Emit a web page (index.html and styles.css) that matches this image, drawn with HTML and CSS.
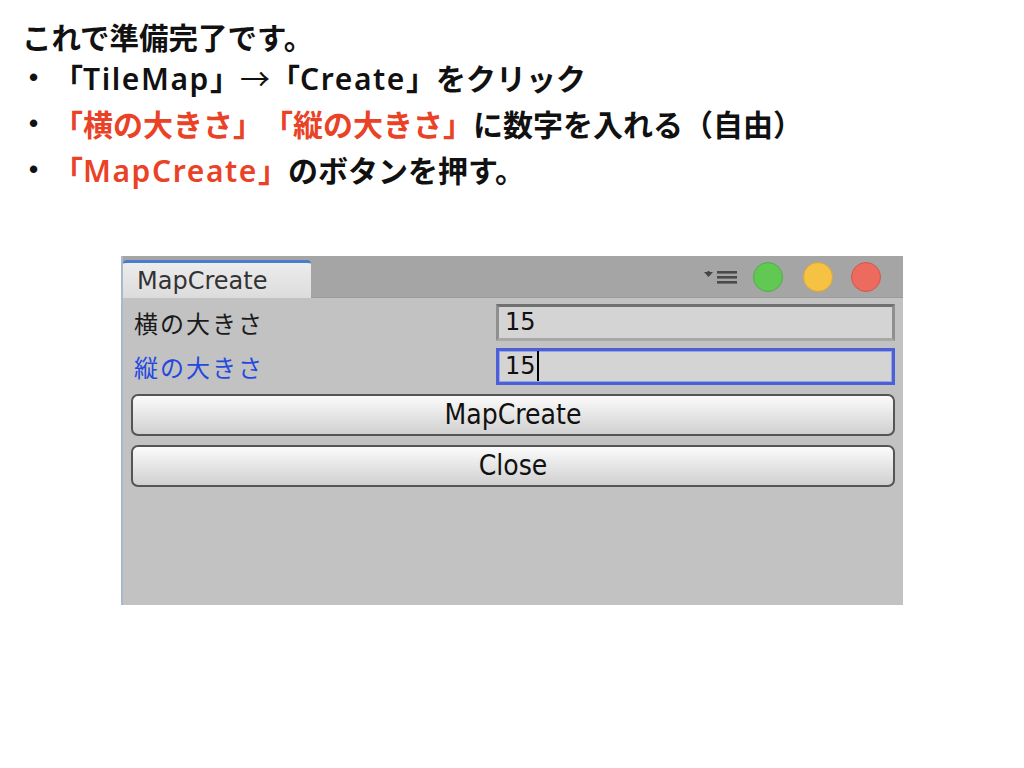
FILE: index.html
```html
<!DOCTYPE html>
<html lang="ja">
<head>
<meta charset="utf-8">
<title>MapCreate</title>
<link rel="stylesheet" href="styles.css">
</head>
<body>
<div class="slide">
  <p class="lead">これで準備完了です。</p>
  <ul class="steps">
    <li><span class="dot">•</span><span>「<span class="latin">TileMap</span>」<span class="arrow">→</span>「<span class="latin">Create</span>」をクリック</span></li>
    <li><span class="dot">•</span><span><span class="red">「横の大きさ」「縦の大きさ」</span>に数字を入れる（自由）</span></li>
    <li><span class="dot">•</span><span><span class="red">「<span class="latin">MapCreate</span>」</span>のボタンを押す。</span></li>
  </ul>

  <div class="window">
    <div class="titlebar">
      <div class="tab">MapCreate</div>
      <div class="controls">
        <svg class="menu" width="34" height="16" viewBox="0 0 34 16">
          <path d="M0 3 L9 3 L4.5 8 Z" fill="#444"/>
          <rect x="3.5" y="2" width="2" height="2" fill="#444"/>
          <rect x="13" y="2" width="20" height="2.6" fill="#4a4a4a"/>
          <rect x="13" y="7" width="20" height="2.6" fill="#4a4a4a"/>
          <rect x="13" y="12" width="20" height="2.6" fill="#4a4a4a"/>
        </svg>
        <span class="light green"></span>
        <span class="light yellow"></span>
        <span class="light red-light"></span>
      </div>
    </div>
    <div class="content">
      <div class="row">
        <label class="label">横の大きさ</label>
        <div class="field">15</div>
      </div>
      <div class="row">
        <label class="label focus">縦の大きさ</label>
        <div class="field active">15<span class="caret"></span></div>
      </div>
      <div class="button">MapCreate</div>
      <div class="button">Close</div>
    </div>
  </div>
</div>
</body>
</html>
```

FILE: styles.css
```css
html, body {
  margin: 0;
  padding: 0;
  background: #ffffff;
}

.slide {
  width: 1024px;
  height: 768px;
  padding-top: 18px;
  box-sizing: border-box;
  font-family: "Noto Sans CJK JP", sans-serif;
  color: #111;
  text-spacing-trim: space-all;
}

.lead {
  margin: 0 0 0 22px;
  height: 36px;
  display: flex;
  align-items: center;
  font-size: 29.5px;
  font-weight: 600;
  white-space: nowrap;
}

.steps {
  list-style: none;
  margin: 0;
  padding: 0 0 0 22px;
  font-size: 30px;
  font-weight: 600;
}

.steps li {
  display: flex;
  align-items: center;
  height: 46px;
  white-space: nowrap;
}

.latin {
  font-family: "Noto Sans", sans-serif;
  font-weight: 600;
  letter-spacing: 1.6px;
}

.arrow {
  font-weight: 400;
}

.dot {
  width: 31px;
  padding-right: 8px;
  box-sizing: border-box;
  text-align: center;
  font-family: "Liberation Sans", sans-serif;
  font-size: 26px;
}

.red {
  color: #ea4226;
}

.window {
  margin: 64px 0 0 121px;
  width: 782px;
  height: 349px;
  background: #c2c2c2;
  border-left: 2px solid #a9b9cc;
  box-sizing: border-box;
  display: flex;
  flex-direction: column;
  font-family: "DejaVu Sans", "Noto Sans CJK JP", sans-serif;
}

.titlebar {
  height: 42px;
  background: #a5a5a5;
  display: flex;
  align-items: flex-end;
  justify-content: space-between;
  border-bottom: 1px solid #9a9a9a;
  box-sizing: border-box;
}

.tab {
  width: 188px;
  height: 38px;
  box-sizing: border-box;
  border-top: 3px solid #4a7bcc;
  border-radius: 4px 4px 0 0;
  background: linear-gradient(#ececec, #dcdcdc);
  color: #333;
  font-size: 24px;
  line-height: 37px;
  padding-left: 14px;
  margin-bottom: -1px;
}

.controls {
  align-self: center;
  display: flex;
  align-items: center;
  padding-right: 22px;
}

.menu {
  margin-right: 15px;
}

.light {
  width: 30px;
  height: 30px;
  border-radius: 50%;
  box-sizing: border-box;
}

.green {
  background: #61c853;
  border: 1px solid #4fae44;
  margin-right: 20px;
}

.yellow {
  background: #f6c244;
  border: 1px solid #dfa834;
  margin-right: 18px;
}

.red-light {
  background: #ec6a5e;
  border: 1px solid #d6564b;
}

.content {
  flex: 1;
  padding: 2px 8px 0 8px;
  display: flex;
  flex-direction: column;
}

.row {
  display: flex;
  align-items: center;
  justify-content: space-between;
  height: 44px;
}

.label {
  padding-left: 3px;
  font-size: 24px;
  letter-spacing: 2px;
  color: #1a1a1a;
}

.label.focus {
  color: #2449df;
}

.field {
  width: 399px;
  height: 37px;
  box-sizing: border-box;
  background: #d4d4d4;
  border: 3px solid #8f8f8f;
  border-top-color: #707070;
  border-bottom-color: #a8a8a8;
  font-size: 24px;
  line-height: 31px;
  padding-left: 6px;
  color: #111;
  display: flex;
  align-items: center;
}

.field.active {
  border: 3px solid #4a5fd8;
  box-shadow: inset 0 0 0 1px #9aa5e0;
}

.caret {
  display: inline-block;
  width: 2px;
  height: 30px;
  background: #000;
  margin-left: 1px;
}

.button {
  margin-top: 6px;
  height: 42px;
  box-sizing: border-box;
  border: 2px solid #555;
  border-radius: 7px;
  background: linear-gradient(#fbfbfb, #d0d0d0);
  text-align: center;
  font-family: "DejaVu Sans Condensed", "DejaVu Sans", sans-serif;
  font-stretch: condensed;
  font-size: 28px;
  line-height: 37px;
  color: #111;
}

.button + .button {
  margin-top: 9px;
}
```
